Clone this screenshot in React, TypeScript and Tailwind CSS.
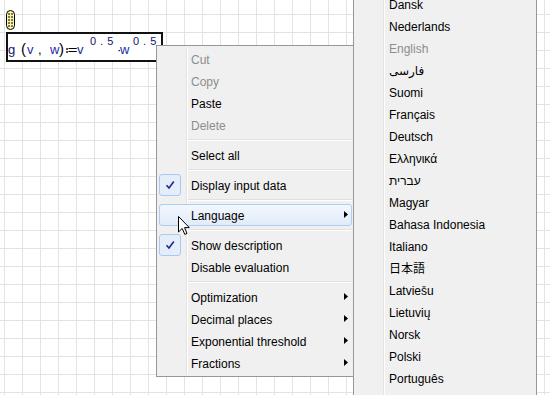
import React from "react";

type Item =
  | { kind: "sep" }
  | { kind: "item"; label: string; disabled?: boolean; checked?: boolean; sub?: boolean; hot?: boolean };

const MENU: Item[] = [
  { kind: "item", label: "Cut", disabled: true },
  { kind: "item", label: "Copy", disabled: true },
  { kind: "item", label: "Paste" },
  { kind: "item", label: "Delete", disabled: true },
  { kind: "sep" },
  { kind: "item", label: "Select all" },
  { kind: "sep" },
  { kind: "item", label: "Display input data", checked: true },
  { kind: "sep" },
  { kind: "item", label: "Language", sub: true, hot: true },
  { kind: "sep" },
  { kind: "item", label: "Show description", checked: true },
  { kind: "item", label: "Disable evaluation" },
  { kind: "sep" },
  { kind: "item", label: "Optimization", sub: true },
  { kind: "item", label: "Decimal places", sub: true },
  { kind: "item", label: "Exponential threshold", sub: true },
  { kind: "item", label: "Fractions", sub: true },
];

const LANGS: { label: string; disabled?: boolean }[] = [
  { label: "Dansk" },
  { label: "Nederlands" },
  { label: "English", disabled: true },
  { label: "فارسی" },
  { label: "Suomi" },
  { label: "Français" },
  { label: "Deutsch" },
  { label: "Ελληνικά" },
  { label: "עברית" },
  { label: "Magyar" },
  { label: "Bahasa Indonesia" },
  { label: "Italiano" },
  { label: "日本語" },
  { label: "Latviešu" },
  { label: "Lietuvių" },
  { label: "Norsk" },
  { label: "Polski" },
  { label: "Português" },
];

const uiFont = "[font-family:'Liberation_Sans','DejaVu_Sans','Noto_Sans_CJK_JP',sans-serif]";

function Check() {
  return (
    <div className="absolute left-0 top-0 flex h-[22px] w-[22px] items-center justify-center rounded-[3px] border border-[#a9c9f0] bg-[#e4edf9]">
      <svg width="10" height="10" viewBox="0 0 10 10">
        <path d="M1.5 5.2 L4 8 L8.8 1.5" fill="none" stroke="#1b2a8a" strokeWidth="1.6" />
      </svg>
    </div>
  );
}

function Arrow() {
  return (
    <svg className="absolute right-[4px] top-[7px]" width="4" height="7" viewBox="0 0 4 7">
      <polygon points="0,0 4,3.5 0,7" fill="#000" />
    </svg>
  );
}

function Cursor() {
  return (
    <svg className="absolute left-[178px] top-[216px]" width="13" height="20" viewBox="0 0 13 20">
      <path
        d="M0.5 0.5 L0.5 16 L4.2 12.4 L6.8 18.4 L9 17.4 L6.5 11.6 L11.3 11.6 Z"
        fill="#fff"
        stroke="#000"
        strokeWidth="1"
        strokeLinejoin="miter"
      />
    </svg>
  );
}

export default function App() {
  return (
    <div
      className={`relative h-[395px] w-[550px] overflow-hidden bg-white bg-[linear-gradient(to_right,#e3e3e3_1px,transparent_1px),linear-gradient(to_bottom,#e3e3e3_1px,transparent_1px)] bg-[size:18px_18px] bg-[position:4px_14px] ${uiFont}`}
    >
      {/* region marker */}
      <svg className="absolute left-[6px] top-[10px]" width="9" height="20" viewBox="0 0 9 20">
        <rect x="0.5" y="0.5" width="8" height="19" rx="4" fill="#fbf3a6" stroke="#000" strokeWidth="1" />
        <line x1="3" y1="3" x2="3" y2="17" stroke="#000" strokeWidth="1" strokeDasharray="2 1" />
        <line x1="6" y1="3" x2="6" y2="17" stroke="#000" strokeWidth="1" strokeDasharray="2 1" />
      </svg>

      {/* formula */}
      <div className="absolute left-[6px] top-[32px] flex h-[30px] w-[157px] items-end border-2 border-[#111] bg-white pb-[4px] text-[13px] leading-none [font-family:'Liberation_Sans',sans-serif]">
        <span className="w-[13px] text-[#14146a]">g</span>
        <span className="w-[6px] text-[15px] text-black">(</span>
        <span className="w-[11px] text-[#1c2ca6]">v</span>
        <span className="w-[12px] text-black">,</span>
        <span className="w-[9px] text-[#1c2ca6]">w</span>
        <span className="w-[6px] text-[15px] text-black">)</span>
        <span className="w-[12px] text-black">≔</span>
        <span className="w-[13px] text-[#1c2ca6]">v</span>
        <span className="mb-[9px] w-[27px] text-[11px] tracking-[4px] text-[#14146a]">0.5</span>
        <span className="w-[3px] text-black">·</span>
        <span className="w-[13px] text-[#1c2ca6]">w</span>
        <span className="mb-[9px] w-[28px] text-[11px] tracking-[4px] text-[#14146a]">0.5</span>
      </div>

      {/* context menu */}
      <div className="absolute left-[156px] top-[45px] w-[199px] border border-[#979797] bg-[#f0f0f0] p-[2px] text-[12px]">
        <div className="relative">
          <div className="absolute bottom-0 left-[27px] top-0 w-[2px] border-l border-[#e2e3e3] bg-white" />
          {MENU.map((m, i) =>
            m.kind === "sep" ? (
              <div key={i} className="relative flex h-[8px] items-center pl-[29px]">
                <div className="h-[2px] w-full border-t border-[#e0e0e0] bg-white" />
              </div>
            ) : (
              <div key={i} className="relative flex h-[22px] items-center pl-[32px] pt-[2px]">
                {m.hot && (
                  <div className="absolute inset-0 rounded-[3px] border border-[#aecdf3] bg-[linear-gradient(to_bottom,#f2f7fe,#e1ecf9)]" />
                )}
                {m.checked && <Check />}
                <span className={`relative ${m.disabled ? "text-[#8d8d8d]" : "text-black"}`}>{m.label}</span>
                {m.sub && <Arrow />}
              </div>
            ),
          )}
        </div>
      </div>

      {/* language submenu */}
      <div className="absolute left-[353px] top-[-10px] w-[184px] border border-[#979797] bg-[#f0f0f0] p-[2px] text-[12px]">
        <div className="relative">
          <div className="absolute bottom-0 left-[27px] top-0 w-[2px] border-l border-[#e2e3e3] bg-white" />
          {LANGS.map((l) => (
            <div key={l.label} className="relative flex h-[22px] items-center pl-[33px] pt-[2px]">
              <span className={l.disabled ? "text-[#8d8d8d]" : "text-black"}>{l.label}</span>
            </div>
          ))}
          <div className="h-[22px]" />
        </div>
      </div>

      <Cursor />
    </div>
  );
}
